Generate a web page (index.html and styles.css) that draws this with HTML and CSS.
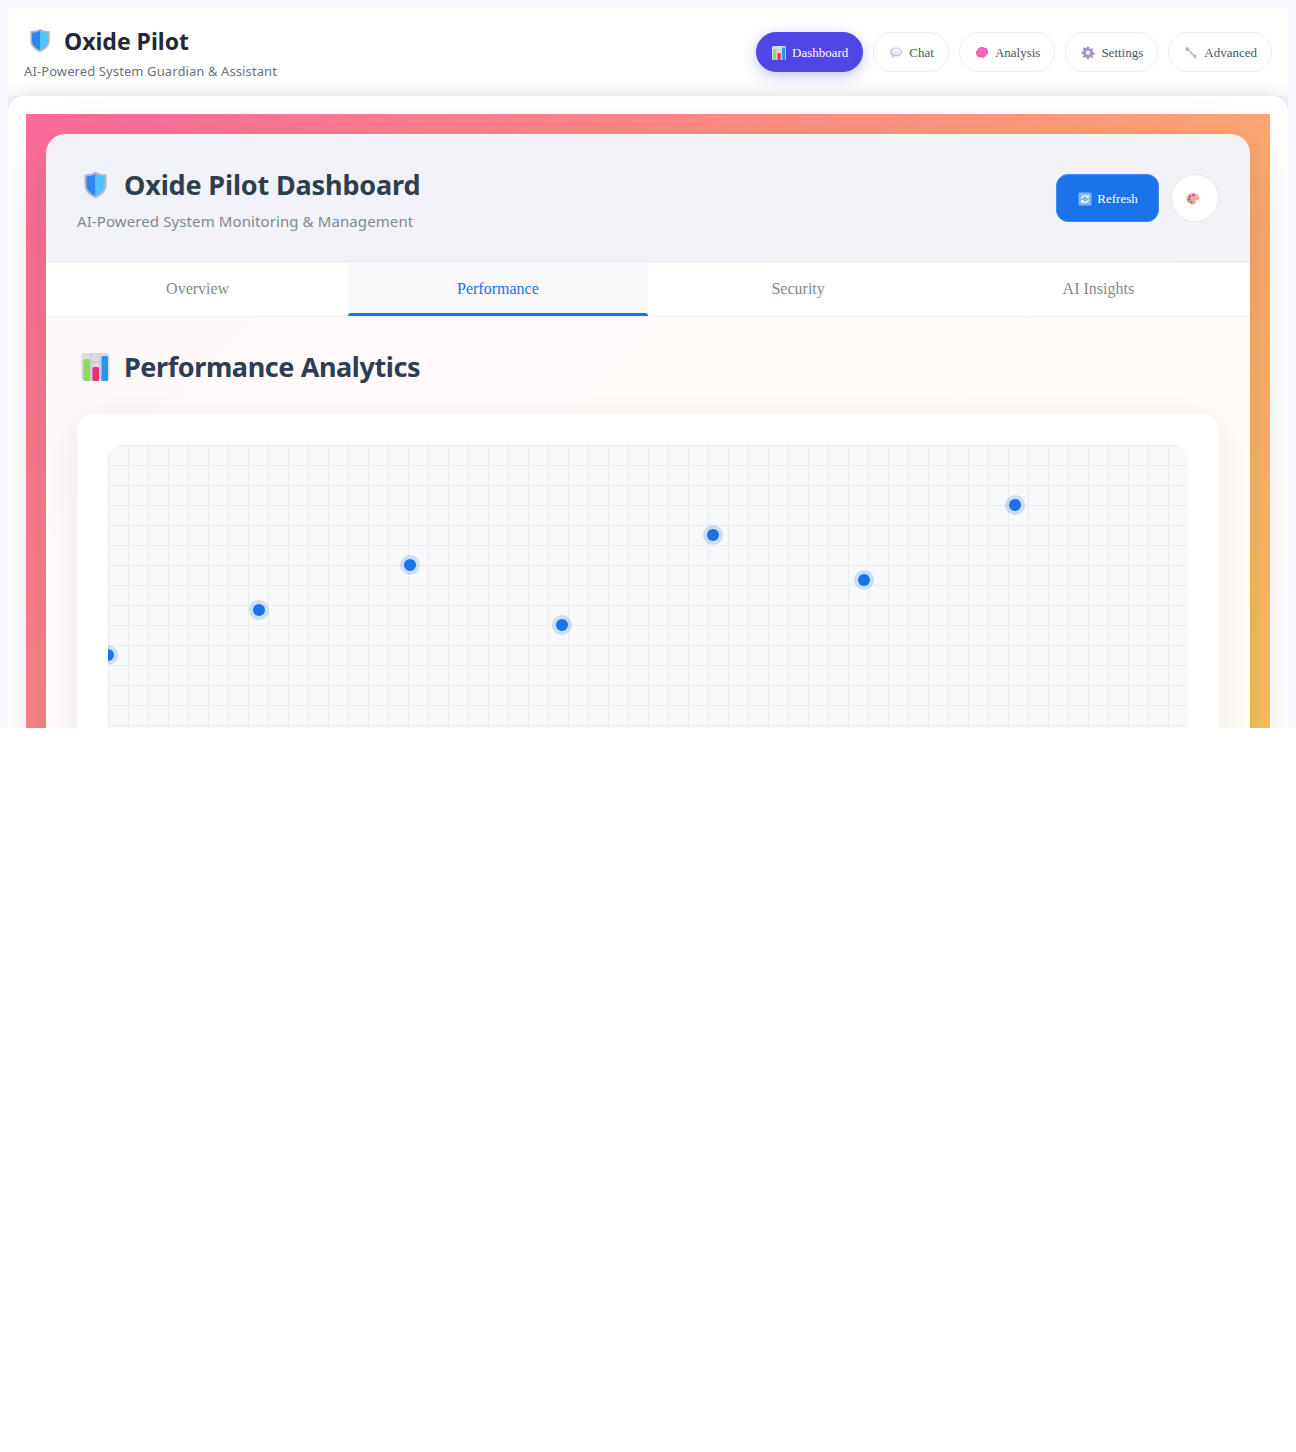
FILE: index.html
```html
<!DOCTYPE html>
<html lang="en">
<head>
  <meta charset="UTF-8">
  <meta name="viewport" content="width=device-width, initial-scale=1.0">
  <title>Oxide Pilot</title>
  <link rel="stylesheet" href="styles.css">
</head>
<body>
  <svg class="icon-defs" width="0" height="0">
    <symbol id="shield" viewBox="0 0 24 28">
      <path d="M12 .8c2.6 1.6 6 2.6 11 2.8v10.2c0 6-4.4 10.600-11 13.400C5.400 24.400 1 19.800 1 13.800V3.600C6 3.400 9.400 2.400 12 .8z" fill="#b3b5c6"/>
      <path d="M12 3c-2.400 1.300-5.300 2.100-9 2.400v8.400c0 4.900 3.500 8.700 9 11.200z" fill="#2f86ee"/>
      <path d="M12 3c2.400 1.300 5.300 2.100 9 2.400v8.400c0 4.900-3.500 8.700-9 11.200z" fill="#4fc3fd"/>
    </symbol>
    <symbol id="bars" viewBox="0 0 28 28">
      <rect width="28" height="28" rx="3" fill="#dcd9e6"/>
      <path d="M0 9h28M0 18h28M9.500 0v28M18.500 0v28" stroke="#c4c2cc" stroke-width="1"/>
      <rect x="2" y="6" width="6.500" height="22" rx="1.500" fill="#8fdc5c"/>
      <rect x="11" y="14" width="6.500" height="14" rx="1.500" fill="#e8306f"/>
      <rect x="20" y="3" width="6.500" height="25" rx="1.500" fill="#2a94ea"/>
    </symbol>
    <symbol id="bubble" viewBox="0 0 14 14">
      <path d="M7 1.500c3.400 0 6 1.900 6 4.500s-2.600 4.500-6 4.500c-.6 0-1.100 0-1.600-.2L3 12.500l.3-2.900C1.900 8.800 1 7.500 1 6c0-2.600 2.600-4.500 6-4.500z" fill="#c9bde2"/>
      <ellipse cx="7.300" cy="5.500" rx="4.600" ry="3.300" fill="#f1edf8"/>
    </symbol>
    <symbol id="brain" viewBox="0 0 14 14">
      <path d="M5 1.500c1.500-.8 3.500-.6 4.500.3 2-.1 3.700 1.500 3.500 3.500.6 1.700-.3 3.700-2 4.200-.2 1-1 1.500-2 1.300L8 12.800l-1.400-1.500C4 11.800 1.800 10.700 1.500 8.700.3 7.300.8 5 2.300 4.400 2.500 2.800 3.600 1.700 5 1.500z" fill="#f45cb4"/>
      <path d="M4 4.500c1.500-1 3-.6 4 .4M3.500 8c1.500-.6 3-.3 4 .6M9 3.500c.8 1 1.800 1.500 2.800 1.500M9.500 7.500c.6.5 1.300.7 2 .6" fill="none" stroke="#fb9ad2" stroke-width=".8"/>
    </symbol>
    <symbol id="gear" viewBox="0 0 14 14">
      <path d="M6 .8h2l.3 1.700 1.300.5L11 2l1.400 1.400-1 1.400.5 1.300 1.700.3v2l-1.700.3-.5 1.300 1 1.400L11 12.100l-1.400-1-1.300.5-.3 1.700H6l-.3-1.700-1.300-.5-1.400 1L1.600 10.700l1-1.400-.5-1.300L.4 7.700v-2l1.700-.3.500-1.300-1-1.400L3 1.300l1.400 1 1.300-.5z" fill="#a596c0"/>
      <circle cx="7" cy="6.800" r="2.300" fill="#ece8f3"/>
    </symbol>
    <symbol id="wrench" viewBox="0 0 14 14">
      <path d="M4 3.500 10.500 10" fill="none" stroke="#cdc5de" stroke-width="2.200" stroke-linecap="round"/>
      <path d="M1 2.800 2.800 1l1.700.6L5 4 4 5 1.700 4.400zM9.500 9.200l1.200-.5 2.300.8-1.300.8.200 1 1.100.8-1.900.4-1.700-1.500z" fill="#b9aed2"/>
    </symbol>
    <symbol id="refresh" viewBox="0 0 14 14">
      <rect x=".5" y=".5" width="13" height="13" rx="1" fill="#7fb8f5"/>
      <path d="M3.500 6.500A3.600 3.600 0 0 1 10 5M10.500 7.500A3.600 3.600 0 0 1 4 9" fill="none" stroke="#fff" stroke-width="1.400"/>
      <path d="M10.800 2.800v3H7.800zM3.200 11.200v-3h3z" fill="#fff"/>
    </symbol>
    <symbol id="palette" viewBox="0 0 14 14">
      <path d="M7 1c3.500 0 6.500 2.300 6.500 5.300 0 1.500-1.400 1.800-2.700 1.600-1-.1-1.500.6-1.200 1.500.4 1.200-.2 3.100-2.300 3.100C3.400 12.500.5 10 .5 6.800.5 3.600 3.300 1 7 1z" fill="#f7a893"/>
      <circle cx="4" cy="4.500" r="1.200" fill="#e0368c"/>
      <circle cx="7.500" cy="3.200" r="1.200" fill="#9c55d8"/>
      <circle cx="3" cy="7.500" r="1.200" fill="#2aa198"/>
      <circle cx="5.500" cy="10" r="1.200" fill="#3a8fe0"/>
    </symbol>
  </svg>

  <div class="app">
    <div class="shell">
      <header class="top-bar">
        <div class="brand">
          <div class="brand-row">
            <svg class="brand-icon"><use href="#shield"/></svg>
            <h1 class="brand-title">Oxide Pilot</h1>
          </div>
          <p class="brand-sub">AI-Powered System Guardian &amp; Assistant</p>
        </div>
        <nav class="nav">
          <button class="nav-btn nav-btn-active"><svg class="btn-icon"><use href="#bars"/></svg>Dashboard</button>
          <button class="nav-btn"><svg class="btn-icon"><use href="#bubble"/></svg>Chat</button>
          <button class="nav-btn"><svg class="btn-icon"><use href="#brain"/></svg>Analysis</button>
          <button class="nav-btn"><svg class="btn-icon"><use href="#gear"/></svg>Settings</button>
          <button class="nav-btn"><svg class="btn-icon"><use href="#wrench"/></svg>Advanced</button>
        </nav>
      </header>

      <main class="main">
        <div class="backdrop">
          <section class="dashboard">
            <div class="dash-head">
              <div>
                <div class="dash-title-row">
                  <svg class="title-icon"><use href="#shield"/></svg>
                  <h2 class="dash-title">Oxide Pilot Dashboard</h2>
                </div>
                <p class="dash-sub">AI-Powered System Monitoring &amp; Management</p>
              </div>
              <div class="dash-actions">
                <button class="refresh-btn"><svg class="btn-icon"><use href="#refresh"/></svg>Refresh</button>
                <button class="theme-btn"><svg class="btn-icon"><use href="#palette"/></svg></button>
              </div>
            </div>

            <div class="tabs">
              <button class="tab">Overview</button>
              <button class="tab tab-active">Performance</button>
              <button class="tab">Security</button>
              <button class="tab">AI Insights</button>
            </div>

            <div class="tab-body">
              <div class="section-title-row">
                <svg class="title-icon"><use href="#bars"/></svg>
                <h3 class="section-title">Performance Analytics</h3>
              </div>
              <div class="chart-card">
                <div class="chart">
                  <span class="point" style="left: 0%; bottom: 30%"></span>
                  <span class="point" style="left: 14%; bottom: 45%"></span>
                  <span class="point" style="left: 28%; bottom: 60%"></span>
                  <span class="point" style="left: 42%; bottom: 40%"></span>
                  <span class="point" style="left: 56%; bottom: 70%"></span>
                  <span class="point" style="left: 70%; bottom: 55%"></span>
                  <span class="point" style="left: 84%; bottom: 80%"></span>
                </div>
              </div>
            </div>
          </section>
        </div>
      </main>
    </div>
  </div>
</body>
</html>
```

FILE: styles.css
```css
* {
  box-sizing: border-box;
}

html,
body {
  margin: 0;
  padding: 0;
  background: #fff;
}

body {
  height: 1452px;
  font-family: "Noto Sans", sans-serif;
}

.icon-defs {
  position: absolute;
}

button {
  font-family: "Liberation Serif", serif;
  cursor: pointer;
}

h1,
h2,
h3,
p {
  margin: 0;
}

/* shell stops at half of the window, the rest of the page is blank */
.app {
  height: 728px;
  padding: 8px 8px 0;
  background: #f8f9ff;
}

.shell {
  height: 720px;
  overflow: hidden;
}

.top-bar {
  display: flex;
  justify-content: space-between;
  align-items: center;
  height: 88px;
  padding: 0 16px;
  background: #fff;
}

.brand-row {
  display: flex;
  align-items: center;
  gap: 8px;
}

.brand-icon {
  width: 32px;
  height: 25px;
}

.brand-title {
  font-size: 23px;
  line-height: 32px;
  font-weight: 700;
  color: #1f2937;
}

.brand-sub {
  margin-top: 5px;
  font-size: 13px;
  line-height: 18px;
  letter-spacing: 0.1px;
  color: #6b7280;
}

.nav {
  display: flex;
  gap: 10px;
}

.nav-btn {
  display: flex;
  align-items: center;
  gap: 6px;
  height: 40px;
  padding: 1px 14px 0 15px;
  border: 1px solid #eeeef2;
  border-radius: 20px;
  background: #fff;
  color: #4b5563;
  font-size: 13px;
}

.nav-btn-active {
  border-color: #4f46e5;
  background: #4f46e5;
  color: #fff;
  box-shadow: 0 4px 14px rgba(79, 70, 229, 0.3);
}

.btn-icon {
  width: 14px;
  height: 14px;
  flex: none;
}

.main {
  height: 640px;
  padding: 18px 18px 0;
  border-radius: 16px 16px 0 0;
  background: #fff;
  box-shadow: 0 0 20px rgba(0, 0, 0, 0.14);
}

.backdrop {
  height: 760px;
  padding: 20px;
  background: linear-gradient(135deg, #ff6b9d 0%, #feca57 100%);
}

.dashboard {
  border-radius: 20px;
  background: rgba(255, 255, 255, 0.95);
  box-shadow: 0 20px 60px rgba(0, 0, 0, 0.15);
  overflow: hidden;
}

.dash-head {
  display: flex;
  justify-content: space-between;
  align-items: center;
  height: 128px;
  padding: 0 31px;
  background: linear-gradient(135deg, #f1f1f8, #f2f3f6);
  border-bottom: 1px solid #e5e5ec;
}

.dash-title-row,
.section-title-row {
  display: flex;
  align-items: center;
  gap: 10px;
}

.dash-title-row {
  padding-top: 3px;
}

.title-icon {
  width: 37px;
  height: 28px;
}

.dash-title,
.section-title {
  font-size: 27px;
  line-height: 38px;
  font-weight: 700;
  color: #2c3e50;
}

.dash-title {
  letter-spacing: -0.15px;
}

.section-title {
  letter-spacing: -0.4px;
}

.dash-sub {
  margin-top: 6px;
  font-size: 15px;
  line-height: 22px;
  letter-spacing: 0.1px;
  color: #7f8c8d;
}

.dash-actions {
  display: flex;
  align-items: center;
  gap: 12px;
}

.refresh-btn {
  display: flex;
  align-items: center;
  justify-content: center;
  gap: 5px;
  width: 103px;
  height: 48px;
  padding: 2px 0 0 1px;
  border: 1px solid #3f8bed;
  border-radius: 12px;
  background: #1a73e8;
  color: #fff;
  font-size: 13px;
}

.theme-btn {
  display: flex;
  align-items: center;
  justify-content: center;
  width: 48px;
  height: 48px;
  padding: 2px 4px 0 0;
  border: 1px solid #e9e9ee;
  border-radius: 50%;
  background: #fff;
}

.tabs {
  display: flex;
  padding: 0 1.5px;
  background: #fff;
  border-bottom: 1px solid #f0eff3;
}

.tab {
  position: relative;
  flex: 1;
  height: 54px;
  padding: 0;
  border: none;
  background: none;
  color: #7f8c8d;
  font-size: 16px;
}

.tab-active {
  background: #f9f8fa;
  color: #1a73e8;
}

.tab-active::after {
  content: "";
  position: absolute;
  left: 0;
  right: 0;
  bottom: 0;
  height: 3px;
  border-radius: 3px 3px 0 0;
  background: #1a73e8;
}

.tab-body {
  padding: 31px;
}

.section-title-row {
  margin-bottom: 28px;
}

.chart-card {
  padding: 31px;
  border-radius: 16px;
  background: #fff;
  box-shadow: 0 8px 32px rgba(0, 0, 0, 0.07);
}

.chart {
  position: relative;
  height: 300px;
  border-radius: 12px;
  background-color: #f8f9fa;
  background-image:
    linear-gradient(#e9ebee 1px, transparent 1px),
    linear-gradient(90deg, #e9ebee 1px, transparent 1px);
  background-size: 20px 20px;
  overflow: hidden;
}

.point {
  position: absolute;
  width: 12px;
  height: 12px;
  border-radius: 50%;
  background: #1a73e8;
  box-shadow: 0 0 0 4px rgba(26, 115, 232, 0.2);
  transform: translate(-50%, 50%);
}
```
